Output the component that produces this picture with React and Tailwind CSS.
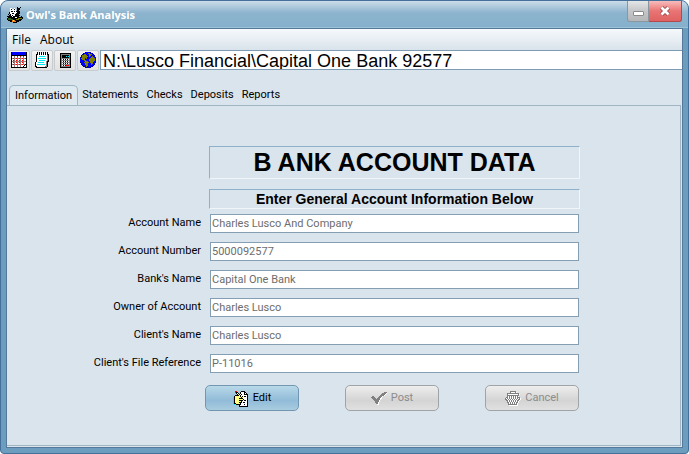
import { useState } from 'react';

const TABS = ['Information', 'Statements', 'Checks', 'Deposits', 'Reports'];

const FIELDS = [
  { id: 'account-name', label: 'Account Name', value: 'Charles Lusco And Company' },
  { id: 'account-number', label: 'Account Number', value: '5000092577' },
  { id: 'bank-name', label: "Bank's Name", value: 'Capital One Bank' },
  { id: 'owner', label: 'Owner of Account', value: 'Charles Lusco' },
  { id: 'client-name', label: "Client's Name", value: 'Charles Lusco' },
  { id: 'file-ref', label: "Client's File Reference", value: 'P-11016' },
];

// one character per pixel, "." is transparent
const PALETTE = {
  k: '#000000',
  w: '#ffffff',
  b: '#0000ff',
  n: '#000090',
  r: '#ff0000',
  m: '#a07878',
  g: '#808080',
  c: '#00e8f0',
  y: '#ffff80',
  o: '#808000',
  O: '#f08010',
  G: '#306018',
  d: '#808080',
};

const OWL = [
  '..........k..k..',
  '...ww..w..kkk...',
  '...wkwwkw.kkk...',
  '...wwwwww.kk....',
  '...wkkwkwkkkk...',
  '..kwwwwwwwkkk...',
  '..kwwkkwwkkkk...',
  '.k.kwwwwkkkk....',
  '..kkwkwwkkkkk...',
  'kkkkkwkkkkkk..k.',
  '.kkkkkkkwwkkkkkk',
  'kGGGkkkkkkkooook',
  'kGGGGGkkkoookkk.',
  '.kkkkOyOkkkkkk..',
  '...kkOOOOkkk....',
  '......kkkk......',
];

const CALENDAR = [
  'kbbbbbbbbbbbbbbk',
  'kbbbbbbbbbbbbbbk',
  'kbbbbbbbbbbbbbbk',
  'kkkkkkkkkkkkkkkk',
  'kwwmwwrwwrwwrwwk',
  'kwwmwwmwwmwwmwwk',
  'kmrmmrmmrmmrmmrk',
  'kwwmwwmwwmwwmwwk',
  'kwrmwrmwrmwrmwwk',
  'kmmmmmmmmmmmmmmk',
  'kwrmwrmwrmwrmwwk',
  'kwwmwwmwwmwwmwwk',
  'kmrmmrmmrmmrmmkk',
  'kwwmwwmwwmwwwkwk',
  'kwwmwwmwwmwwkwwk',
  'kkkkkkkkkkkkkkkk',
];

const NOTEPAD = [
  '..k.k.k.k.k.k.',
  '..kwkwkwkwkwk.',
  '.kkwkwkwkwkwkk',
  '.kwwwwwwwwwwgk',
  '.kwwccccccwwgk',
  '.kwwwwwwwwwwgk',
  '.kwccccccccwgk',
  '.kwwwwwwwwwwgk',
  '.kwwccccccwwgk',
  '.kwwwwwwwwwgkk',
  'kwwccccccwwgk.',
  'kwwwwwwwwwwgk.',
  'kwccccccccwgk.',
  'kwwwwwwwwwwgk.',
  'kkwwwwwwwwggk.',
  '.kkkkkkkkkkk..',
];

const CALCULATOR = [
  'kkkkkkkkkkk',
  'kgggggggggk',
  'kgkkkkkkkgk',
  'kgkkkkckcgk',
  'kgkkkkkkkgk',
  'kgggggggggk',
  'kgwkwkwkwgk',
  'kgggggggggk',
  'kgwkwkwkwgk',
  'kgggggggggk',
  'kgwkwkwkwgk',
  'kgggggggggk',
  'kgwkwkrrrgk',
  'kgggggggggk',
  'kkkkkkkkkkk',
];

const GLOBE = [
  '.....nbbbnn.....',
  '...nbbbboobbn...',
  '..nboobbbooobn..',
  '.nooooobboobbbn.',
  '.boooooobobbobb.',
  'nbooooobbbbooobn',
  'boooobobbbooooob',
  'bbooobbbboooooob',
  'bbbboobbboooooob',
  'bbbbbooobboooobb',
  'nbbbooooobooobbn',
  '.bbbbooobbboobb.',
  '.nbbbooobbbobbn.',
  '..nbbboobbbbbn..',
  '...nnbobbbbnn...',
  '.....nnnnnn.....',
];

const EDIT = [
  '..rr....kkkk....',
  '..rkk..kwwwkk...',
  '...kyk.kwwwkwk..',
  '....kykwkwwkkkk.',
  '..kkkkykwwwwwwk.',
  '.kyyyyykykwkkwk.',
  'ckyyyyyykywwwwk.',
  'ckyyyykkkkwwwwk.',
  'ckyyyyyyyykwwwk.',
  'ckyyyykkkkwkkwk.',
  'ckyyyyyykwwwwwk.',
  'ckyyyykkkwkkwwk.',
  'ckkyyyykwwwwwwk.',
  '.c.kkkkkwwwkwwk.',
  '......kwwwwwwwk.',
  '......kkkkkkkkk.',
];

const CHECK = [
  '.............ddd',
  '...........ddddw',
  '..........ddddw.',
  '.........ddddw..',
  '.dd.....dddw....',
  'dddd...dddw.....',
  '.dddd.dddww.....',
  '..dddddddw......',
  '...dddddw.......',
  '....ddddw.......',
  '....dddw........',
  '.....ddw........',
  '......ww........',
];

const TRASH = [
  '.....dddddd.....',
  '.....dwwwwdw....',
  '..dddddddddddd..',
  '..dwwwwwwwwwwdw.',
  '..dddddddddddd..',
  '..dwdwdwdwdwdw..',
  '.ddwdwdwdwdwddd.',
  'dwdwdwdwdwdwdwdw',
  'ddwdwdwdwdwdwddw',
  '.ddwdwdwdwdwddw.',
  '..dwdwdwdwdwdw..',
  '..ddwdwdwdwddw..',
  '...dwdwdwdwdw...',
  '...dddddddddw...',
  '....wwwwwwwww...',
];

function PixelIcon({ rows }) {
  const width = rows[0].length;
  const height = rows.length;
  return (
    <svg
      width={width}
      height={height}
      viewBox={`0 0 ${width} ${height}`}
      shapeRendering="crispEdges"
      className="shrink-0"
      aria-hidden="true"
    >
      {rows.map((row, y) =>
        [...row].map((ch, x) =>
          ch === '.' ? null : (
            <rect key={`${x}-${y}`} x={x} y={y} width="1" height="1" fill={PALETTE[ch]} />
          )
        )
      )}
    </svg>
  );
}

export default function App() {
  const [tab, setTab] = useState('Information');

  return (
    <div className="flex min-h-screen flex-col rounded-t-lg rounded-b-sm border border-[#44709a] bg-[#6c9cbe] font-[Roboto,'Liberation_Sans',sans-serif] text-[11px] text-black">
      <TitleBar />
      <div className="mx-[5px] mb-[5px] flex flex-1 flex-col border border-[#54799a] bg-[#dae4ec]">
        <nav className="flex h-[21px] items-center gap-[9px] bg-linear-to-b from-[#f6f9fc] to-[#d9e3eb] px-[5px] font-['Open_Sans','Noto_Sans',sans-serif] text-xs">
          <button type="button">File</button>
          <button type="button">About</button>
        </nav>
        <Toolbar />
        <div role="tablist" className="mt-[14px] flex items-end px-[2px]">
          {TABS.map((name) => (
            <button
              key={name}
              type="button"
              role="tab"
              aria-selected={tab === name}
              onClick={() => setTab(name)}
              className={
                tab === name
                  ? '-mb-px h-[21px] rounded-t-[5px] border border-b-0 border-[#9fb8c8] bg-[#dfe9f0] px-[5px]'
                  : 'h-5 px-1 pt-px'
              }
            >
              {name}
            </button>
          ))}
        </div>
        <main className="mr-px mb-px flex-1 border border-l-0 border-[#9fb5c4]">
          {tab === 'Information' && <AccountForm />}
        </main>
      </div>
    </div>
  );
}

function TitleBar() {
  return (
    <header className="flex h-[27px] items-start rounded-t-[7px] border-b border-[#9cc2d8] bg-linear-to-b from-[#cbdde9] via-[#8db4ce] via-45% to-[#85b0cb] pr-[6px] pl-[6px]">
      <div className="flex h-full flex-1 items-center gap-[3px] pt-[2px]">
        <PixelIcon rows={OWL} />
        <h1 className="font-['Open_Sans','Noto_Sans',sans-serif] text-[11px] font-bold text-white">
          Owl's Bank Analysis
        </h1>
      </div>
      <button
        type="button"
        aria-label="Minimize"
        className="flex h-[21px] w-[22px] items-center justify-center rounded-bl-[3px] border border-t-0 border-[#8a979f] bg-linear-to-b from-[#e4e6e7] via-[#c4c6c7] to-[#b4b6b7] pt-1"
      >
        <span className="h-[5px] w-[11px] rounded-[1px] border border-[#8a8a8a] bg-white" />
      </button>
      <button
        type="button"
        aria-label="Close"
        className="flex h-[21px] w-[33px] items-center justify-center rounded-br-[3px] border border-t-0 border-l-0 border-[#b2484c] bg-linear-to-b from-[#f6bcbc] via-[#e97474] to-[#e06262]"
      >
        <svg width="12" height="10" viewBox="0 0 12 10" aria-hidden="true">
          <path d="M2.5 1.5 9.5 8.5M9.5 1.5 2.5 8.5" stroke="#9c4444" strokeWidth="4.4" />
          <path d="M2.5 1.5 9.5 8.5M9.5 1.5 2.5 8.5" stroke="#fff" strokeWidth="2.8" />
        </svg>
      </button>
    </header>
  );
}

function Toolbar() {
  return (
    <div className="flex h-[21px] items-stretch gap-px pl-px">
      <ToolButton label="Calendar" rows={CALENDAR} />
      <ToolButton label="Notes" rows={NOTEPAD} />
      <ToolButton label="Calculator" rows={CALCULATOR} />
      <ToolButton label="Web" rows={GLOBE} />
      <input
        aria-label="Account path"
        readOnly
        defaultValue={'N:\\Lusco Financial\\Capital One Bank 92577'}
        className="h-5 min-w-0 flex-1 border border-r-0 border-[#7d9cb4] bg-white px-[2px] pt-[2px] font-['Liberation_Sans',Arial,sans-serif] text-lg leading-none outline-none"
      />
    </div>
  );
}

function ToolButton({ label, rows }) {
  return (
    <button
      type="button"
      aria-label={label}
      className="flex w-[22px] items-center justify-center rounded-[2px] border border-[#c8ccce] bg-linear-to-b from-[#f2f2f2] to-[#e2e2e2] pb-px"
    >
      <PixelIcon rows={rows} />
    </button>
  );
}

function AccountForm() {
  return (
    <form className="pt-10 pr-[100px] pb-8 pl-[85px]" onSubmit={(e) => e.preventDefault()}>
      <div className="pl-[117px] font-['Liberation_Sans',Arial,sans-serif] font-bold">
        <h2 className="flex h-[33px] items-center justify-center border border-t-[#8fb0c8] border-r-[#f0f5f9] border-b-[#f0f5f9] border-l-[#8fb0c8] text-[25px]">
          B ANK ACCOUNT DATA
        </h2>
        <p className="mt-[10px] flex h-5 items-center justify-center border border-t-[#8fb0c8] border-r-[#f0f5f9] border-b-[#f0f5f9] border-l-[#8fb0c8] text-sm">
          Enter General Account Information Below
        </p>
      </div>

      <div className="mt-[5px] flex flex-col gap-[9px] pr-px">
        {FIELDS.map((field) => (
          <div key={field.id} className="flex items-center gap-[9px]">
            <label htmlFor={field.id} className="w-[109px] shrink-0 text-right whitespace-nowrap">
              {field.label}
            </label>
            <input
              id={field.id}
              disabled
              defaultValue={field.value}
              className="h-[19px] min-w-0 flex-1 border border-[#849eb4] bg-white px-px text-[#6d6d6d]"
            />
          </div>
        ))}
      </div>

      <div className="mt-3 flex justify-between gap-2 pr-px pl-[113px]">
        <FormButton label="Edit" rows={EDIT} />
        <FormButton label="Post" rows={CHECK} disabled />
        <FormButton label="Cancel" rows={TRASH} disabled />
      </div>
    </form>
  );
}

function FormButton({ label, rows, disabled = false }) {
  return (
    <button
      type="button"
      disabled={disabled}
      className={
        disabled
          ? 'flex h-[26px] w-[94px] items-center justify-center gap-1 rounded-[5px] border border-[#a0a4a6] bg-linear-to-b from-[#eeeeee] via-[#d4d4d4] via-60% to-[#e0e0e0] pt-px text-[#8c8c8c]'
          : 'flex h-[26px] w-[94px] items-center justify-center gap-1 rounded-[5px] border border-[#7397b3] bg-linear-to-b from-[#b8d9e8] via-[#91bbd8] via-60% to-[#a9cde0] pt-px'
      }
    >
      <PixelIcon rows={rows} />
      {label}
    </button>
  );
}
